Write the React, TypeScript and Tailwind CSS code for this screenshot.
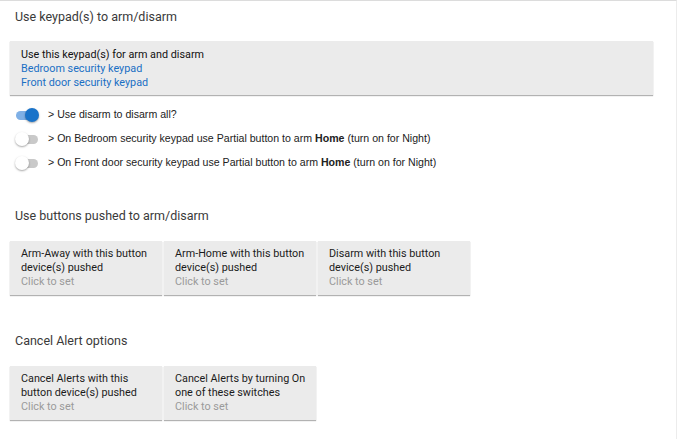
import type { ReactNode } from 'react';

const font = { fontFamily: 'Roboto, "Liberation Sans", sans-serif' };

function Toggle({ on }: { on: boolean }) {
  return (
    <div className="relative w-[24px] h-[14px] flex items-center shrink-0">
      <div className={`w-[22px] h-[9px] rounded-full ml-[1px] ${on ? 'bg-[#7fb0e6]' : 'bg-[#c9c9c9]'}`} />
      <div
        className={`absolute top-0 w-[14px] h-[14px] rounded-full shadow-[0_1px_2px_rgba(0,0,0,0.35)] ${
          on ? 'left-[10px] bg-[#1a73c9]' : 'left-0 bg-white'
        }`}
      />
    </div>
  );
}

function ToggleRow({ on, children }: { on: boolean; children: ReactNode }) {
  return (
    <div className="flex items-center h-[24px] pl-[15px] gap-[9px]">
      <Toggle on={on} />
      <div
        className="text-[10.6px] text-[#222] whitespace-nowrap"
        style={{ fontFamily: '"Liberation Sans", Arial, sans-serif' }}
      >
        {children}
      </div>
    </div>
  );
}

function Card({ lines }: { lines: string[] }) {
  return (
    <div className="w-[152px] h-[54px] bg-[#ebebeb] shadow-[0_1px_1px_rgba(0,0,0,0.3)] px-[11px] pt-[6px] text-[10.8px] leading-[14px] whitespace-nowrap">
      {lines.map((l) => (
        <div key={l} className="text-[#1b1b1b]">{l}</div>
      ))}
      <div className="text-[#9a9a9a]">Click to set</div>
    </div>
  );
}

export default function App() {
  return (
    <div className="w-[690px] h-[439px] bg-white overflow-hidden" style={font}>
      <div className="w-[677px] h-full border-t border-r border-t-[#dcdcdc] border-r-[#ececec]">
        <div className="pl-[15px] pt-[7px] h-[40px] text-[12.5px] text-[#3a3a3a]">Use keypad(s) to arm/disarm</div>

        <div className="ml-[10px] w-[643px] h-[54px] bg-[#ebebeb] shadow-[0_1px_1px_rgba(0,0,0,0.3)] px-[11px] pt-[7px] text-[10.8px] leading-[14px]">
          <div className="text-[#111]">Use this keypad(s) for arm and disarm</div>
          <div className="text-[#1a6fc4]">Bedroom security keypad</div>
          <div className="text-[#1a6fc4]">Front door security keypad</div>
        </div>

        <div className="pt-[8px]">
          <ToggleRow on>&gt; Use disarm to disarm all?</ToggleRow>
          <ToggleRow on={false}>
            &gt; On Bedroom security keypad use Partial button to arm <b>Home</b> (turn on for Night)
          </ToggleRow>
          <ToggleRow on={false}>
            &gt; On Front door security keypad use Partial button to arm <b>Home</b> (turn on for Night)
          </ToggleRow>
        </div>

        <div className="pl-[15px] pt-[32px] h-[66px] text-[12.5px] text-[#3a3a3a]">Use buttons pushed to arm/disarm</div>
        <div className="flex gap-[2px] pl-[10px]">
          <Card lines={['Arm-Away with this button', 'device(s) pushed']} />
          <Card lines={['Arm-Home with this button', 'device(s) pushed']} />
          <Card lines={['Disarm with this button', 'device(s) pushed']} />
        </div>

        <div className="pl-[15px] pt-[37px] h-[71px] text-[12.5px] text-[#3a3a3a]">Cancel Alert options</div>
        <div className="flex gap-[2px] pl-[10px]">
          <Card lines={['Cancel Alerts with this', 'button device(s) pushed']} />
          <Card lines={['Cancel Alerts by turning On', 'one of these switches']} />
        </div>
      </div>
    </div>
  );
}
